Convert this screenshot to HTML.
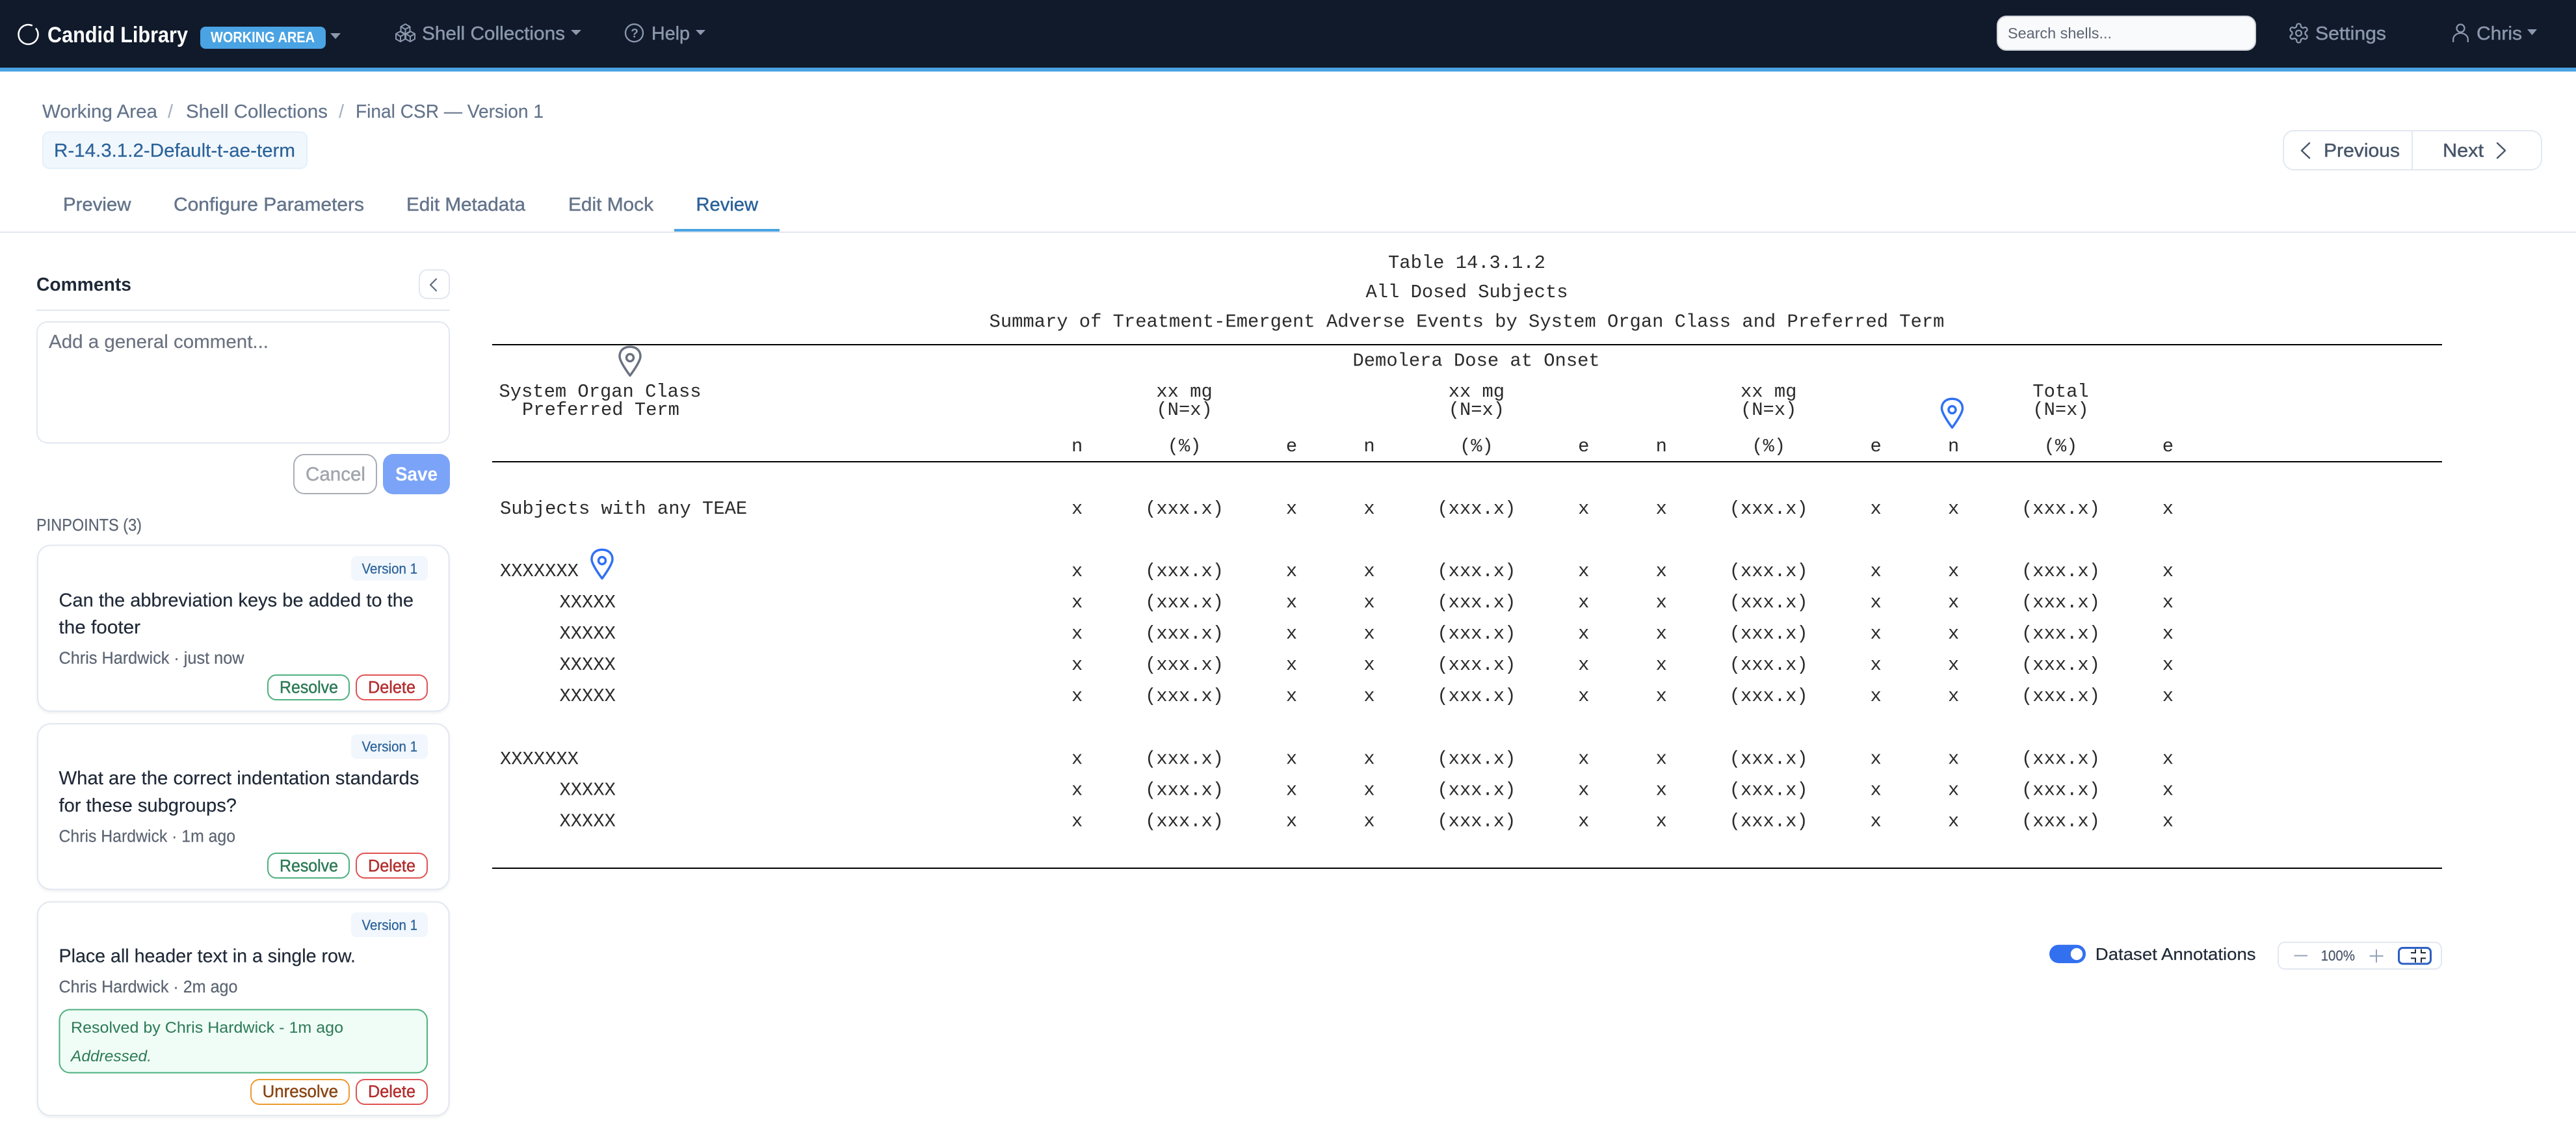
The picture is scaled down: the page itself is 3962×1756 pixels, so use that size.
<!DOCTYPE html>
<html lang="en"><head><meta charset="utf-8"><title>Candid Library</title>
<style>
html,body{margin:0;padding:0;background:#fff;width:3962px;height:1756px;overflow:hidden}
svg{display:block}
text{font-family:"Liberation Sans",sans-serif;white-space:pre}
.b{font-weight:700}
.md{stroke:currentColor;stroke-width:.45px}
.rg{stroke:currentColor;stroke-width:.2px}
.nav{font-size:29px;fill:#8b98ad;color:#8b98ad}
.bc{font-size:29px;fill:#64748b;color:#64748b}
.tab{font-size:29px;fill:#64748b;color:#64748b}
.ct{font-size:28.5px;fill:#1f2937;color:#1f2937}
.meta{font-size:25.5px;fill:#5b6472;color:#5b6472}
.ver{font-size:22px;fill:#2b6299;color:#2b6299}
.btn{font-size:25.5px}
.m text,text.m{font-family:"Liberation Mono",monospace;font-size:28.8px;fill:#2b2b2b;text-anchor:middle}
.ic{fill:none;stroke:#8b98ad;stroke-width:2.3;stroke-linecap:round;stroke-linejoin:round}
.card{fill:#fff;stroke:#e2e8f0;stroke-width:2;filter:drop-shadow(0 2px 2px rgba(15,23,42,.07))}
</style></head><body>
<svg xmlns="http://www.w3.org/2000/svg" width="3962" height="1756" viewBox="0 0 3962 1756">
<rect width="3962" height="1756" fill="#fff"/>
<!-- top bar -->
<rect width="3962" height="104" fill="#111a2b"/>
<rect y="104" width="3962" height="6" fill="#4aa3e3"/>
<path d="M55 43.4A15 15 0 1 1 49.8 39.4" fill="none" stroke="#fff" stroke-width="2.6"/>
<text x="73" y="65" class="b" font-size="34" fill="#fff" textLength="216" lengthAdjust="spacingAndGlyphs">Candid Library</text>
<rect x="308" y="41" width="193" height="34" rx="8" fill="#4aa3e3"/>
<text x="324" y="65" class="b" font-size="23" fill="#fff" textLength="160" lengthAdjust="spacingAndGlyphs">WORKING AREA</text>
<polygon points="508,51 524,51 516,60" fill="#8b98ad"/>
<g class="ic" style="stroke-width:2">
<path transform="translate(623.5 45)" d="M0-8l7 4v8l-7 4-7-4v-8zM-7-4L0 0l7-4M0 0v8"/>
<path transform="translate(616 56)" d="M0-8l7 4v8l-7 4-7-4v-8zM-7-4L0 0l7-4M0 0v8"/>
<path transform="translate(631 56)" d="M0-8l7 4v8l-7 4-7-4v-8zM-7-4L0 0l7-4M0 0v8"/>
</g>
<text x="649" y="61" class="nav md" textLength="220" lengthAdjust="spacingAndGlyphs">Shell Collections</text>
<polygon points="878,46 894,46 886,54" fill="#8b98ad"/>
<circle cx="975.5" cy="50.7" r="13.5" class="ic"/>
<text x="970.3" y="57.5" class="b" font-size="19" fill="#8b98ad">?</text>
<text x="1002" y="61" class="nav md" textLength="59" lengthAdjust="spacingAndGlyphs">Help</text>
<polygon points="1070,46 1085,46 1077.5,54" fill="#8b98ad"/>
<rect x="3072" y="25" width="397" height="52" rx="14" fill="#f9fafb" stroke="#d1d5db" stroke-width="2"/>
<text x="3088" y="59" font-size="23" fill="#5b6472" textLength="160" lengthAdjust="spacingAndGlyphs">Search shells...</text>
<g class="ic" transform="translate(3518.1 33.6) scale(1.45)" style="stroke-width:1.6">
<path d="M12.22 2h-.44a2 2 0 0 0-2 2v.18a2 2 0 0 1-1 1.73l-.43.25a2 2 0 0 1-2 0l-.15-.08a2 2 0 0 0-2.73.73l-.22.38a2 2 0 0 0 .73 2.73l.15.1a2 2 0 0 1 1 1.72v.51a2 2 0 0 1-1 1.74l-.15.09a2 2 0 0 0-.73 2.73l.22.38a2 2 0 0 0 2.73.73l.15-.08a2 2 0 0 1 2 0l.43.25a2 2 0 0 1 1 1.73V20a2 2 0 0 0 2 2h.44a2 2 0 0 0 2-2v-.18a2 2 0 0 1 1-1.73l.43-.25a2 2 0 0 1 2 0l.15.08a2 2 0 0 0 2.73-.73l.22-.39a2 2 0 0 0-.73-2.73l-.15-.08a2 2 0 0 1-1-1.74v-.5a2 2 0 0 1 1-1.74l.15-.09a2 2 0 0 0 .73-2.73l-.22-.38a2 2 0 0 0-2.73-.73l-.15.08a2 2 0 0 1-2 0l-.43-.25a2 2 0 0 1-1-1.73V4a2 2 0 0 0-2-2z"/>
<circle cx="12" cy="12" r="3"/>
</g>
<text x="3561" y="61" class="nav md" textLength="109" lengthAdjust="spacingAndGlyphs">Settings</text>
<circle cx="3784.5" cy="43.5" r="6" class="ic"/>
<path d="M3773.2 64v-3.5a11.3 9.5 0 0 1 22.6 0v3.5" class="ic"/>
<text x="3809" y="61" class="nav md" textLength="70" lengthAdjust="spacingAndGlyphs">Chris</text>
<polygon points="3887,45 3902,45 3894.5,54" fill="#8b98ad"/>

<!-- page header -->
<text x="65" y="181" class="bc rg" textLength="177" lengthAdjust="spacingAndGlyphs">Working Area</text>
<text x="258" y="181" class="bc" style="fill:#a0aec0">/</text>
<text x="286" y="181" class="bc rg" textLength="218" lengthAdjust="spacingAndGlyphs">Shell Collections</text>
<text x="521" y="181" class="bc" style="fill:#a0aec0">/</text>
<text x="547" y="181" class="bc rg" textLength="289" lengthAdjust="spacingAndGlyphs">Final CSR — Version 1</text>
<rect x="66" y="203" width="406" height="56" rx="10" fill="#f0f7fd" stroke="#e4f0fa" stroke-width="2"/>
<text x="83" y="241" font-size="29" class="rg" style="fill:#2b6299;color:#2b6299" textLength="371" lengthAdjust="spacingAndGlyphs">R-14.3.1.2-Default-t-ae-term</text>
<rect x="3512" y="201" width="397" height="60" rx="16" fill="#fff" stroke="#e2e8f0" stroke-width="2"/>
<rect x="3709" y="201" width="2" height="60" fill="#e2e8f0"/>
<path d="M3552 220l-12 11.5 12 11.5M3841 220l12 11.5-12 11.5" fill="none" stroke="#475569" stroke-width="2.4" stroke-linecap="round" stroke-linejoin="round"/>
<text x="3574" y="241" font-size="29" class="md" style="fill:#475569;color:#475569" textLength="117" lengthAdjust="spacingAndGlyphs">Previous</text>
<text x="3757" y="241" font-size="29" class="md" style="fill:#475569;color:#475569" textLength="63" lengthAdjust="spacingAndGlyphs">Next</text>
<text x="97" y="324" class="tab md" textLength="104.5" lengthAdjust="spacingAndGlyphs">Preview</text>
<text x="267" y="324" class="tab md" textLength="293" lengthAdjust="spacingAndGlyphs">Configure Parameters</text>
<text x="625" y="324" class="tab md" textLength="183" lengthAdjust="spacingAndGlyphs">Edit Metadata</text>
<text x="874" y="324" class="tab md" textLength="131" lengthAdjust="spacingAndGlyphs">Edit Mock</text>
<text x="1070.5" y="324" class="tab md" style="fill:#2b6299;color:#2b6299" textLength="95.5" lengthAdjust="spacingAndGlyphs">Review</text>
<rect y="356" width="3962" height="2" fill="#e2e8f0"/>
<rect x="1037" y="352" width="162" height="4" fill="#4aa3e3"/>

<!-- comments sidebar -->
<text x="56" y="447" class="b" font-size="29" fill="#1f2937" textLength="146" lengthAdjust="spacingAndGlyphs">Comments</text>
<rect x="645" y="415" width="46" height="44" rx="12" fill="#fff" stroke="#e2e8f0" stroke-width="2"/>
<path d="M671 429l-9 9 9 9" fill="none" stroke="#5d6b80" stroke-width="2.2" stroke-linecap="round" stroke-linejoin="round"/>
<rect x="56" y="476" width="636" height="2" fill="#e2e8f0"/>
<rect x="57" y="495" width="634" height="186" rx="16" fill="#fff" stroke="#e2e8f0" stroke-width="2"/>
<text x="75" y="535" font-size="29" class="rg" style="fill:#6b7280;color:#6b7280" textLength="338" lengthAdjust="spacingAndGlyphs">Add a general comment...</text>
<rect x="452" y="699" width="127" height="60" rx="16" fill="#fff" stroke="#a8adb5" stroke-width="2"/>
<text x="470" y="739" font-size="29.5" class="md" style="fill:#a0a5ad;color:#a0a5ad" textLength="92" lengthAdjust="spacingAndGlyphs">Cancel</text>
<rect x="589" y="698" width="103" height="62" rx="16" fill="#7ba4f8"/>
<text x="608" y="739" class="b" font-size="29.5" fill="#fff" textLength="65" lengthAdjust="spacingAndGlyphs">Save</text>
<text x="56" y="816" font-size="25.5" class="rg" style="fill:#5b6472;color:#5b6472" textLength="162" lengthAdjust="spacingAndGlyphs">PINPOINTS (3)</text>

<!-- card 1 -->
<rect x="58" y="838.5" width="632.5" height="255" rx="20" class="card"/>
<rect x="540" y="855" width="118" height="38" rx="8" fill="#f1f7fd"/>
<text x="556.5" y="882" class="ver md" style="stroke-width:.25px" textLength="85.5" lengthAdjust="spacingAndGlyphs">Version 1</text>
<text x="90.5" y="932.6" class="ct rg" textLength="545.5" lengthAdjust="spacingAndGlyphs">Can the abbreviation keys be added to the</text>
<text x="90.5" y="974" class="ct rg" textLength="125.5" lengthAdjust="spacingAndGlyphs">the footer</text>
<text x="90.5" y="1020.5" class="meta rg" textLength="285" lengthAdjust="spacingAndGlyphs">Chris Hardwick · just now</text>
<rect x="412" y="1038" width="125" height="38" rx="13" fill="#fff" stroke="#4eb07e" stroke-width="2"/>
<text x="430" y="1065.6" class="btn md" style="fill:#2c7a55;color:#2c7a55" textLength="90" lengthAdjust="spacingAndGlyphs">Resolve</text>
<rect x="548" y="1038" width="109" height="38" rx="13" fill="#fff" stroke="#e05252" stroke-width="2"/>
<text x="566" y="1065.6" class="btn md" style="fill:#b32d2d;color:#b32d2d" textLength="73" lengthAdjust="spacingAndGlyphs">Delete</text>

<!-- card 2 -->
<rect x="58" y="1113" width="632.5" height="254.5" rx="20" class="card"/>
<rect x="540" y="1129" width="118" height="38" rx="8" fill="#f1f7fd"/>
<text x="556.5" y="1155.6" class="ver md" style="stroke-width:.25px" textLength="85.5" lengthAdjust="spacingAndGlyphs">Version 1</text>
<text x="90.5" y="1206" class="ct rg" textLength="554" lengthAdjust="spacingAndGlyphs">What are the correct indentation standards</text>
<text x="90.5" y="1248" class="ct rg" textLength="273.5" lengthAdjust="spacingAndGlyphs">for these subgroups?</text>
<text x="90.5" y="1294.6" class="meta rg" textLength="271.5" lengthAdjust="spacingAndGlyphs">Chris Hardwick · 1m ago</text>
<rect x="412" y="1312" width="125" height="38" rx="13" fill="#fff" stroke="#4eb07e" stroke-width="2"/>
<text x="430" y="1340" class="btn md" style="fill:#2c7a55;color:#2c7a55" textLength="90" lengthAdjust="spacingAndGlyphs">Resolve</text>
<rect x="548" y="1312" width="109" height="38" rx="13" fill="#fff" stroke="#e05252" stroke-width="2"/>
<text x="566" y="1340" class="btn md" style="fill:#b32d2d;color:#b32d2d" textLength="73" lengthAdjust="spacingAndGlyphs">Delete</text>

<!-- card 3 -->
<rect x="58" y="1386.8" width="632.5" height="328.5" rx="20" class="card"/>
<rect x="540" y="1403" width="118" height="38" rx="8" fill="#f1f7fd"/>
<text x="556.5" y="1430" class="ver md" style="stroke-width:.25px" textLength="85.5" lengthAdjust="spacingAndGlyphs">Version 1</text>
<text x="90.5" y="1479.5" class="ct rg" textLength="456.5" lengthAdjust="spacingAndGlyphs">Place all header text in a single row.</text>
<text x="90.5" y="1526" class="meta rg" textLength="275" lengthAdjust="spacingAndGlyphs">Chris Hardwick · 2m ago</text>
<rect x="91.5" y="1552.5" width="565.5" height="97" rx="16" fill="#f0fdf6" stroke="#4eb07e" stroke-width="2"/>
<text x="109" y="1588" font-size="24.5" fill="#2c7a55" textLength="419" lengthAdjust="spacingAndGlyphs">Resolved by Chris Hardwick - 1m ago</text>
<text x="109" y="1632" font-size="24.5" font-style="italic" fill="#2c7a55" textLength="124" lengthAdjust="spacingAndGlyphs">Addressed.</text>
<rect x="386" y="1660" width="151" height="38" rx="13" fill="#fff" stroke="#ed9a30" stroke-width="2"/>
<text x="403.6" y="1687" class="btn md" style="fill:#8a4513;color:#8a4513" textLength="116.4" lengthAdjust="spacingAndGlyphs">Unresolve</text>
<rect x="548" y="1660" width="109" height="38" rx="13" fill="#fff" stroke="#e05252" stroke-width="2"/>
<text x="566" y="1687" class="btn md" style="fill:#b32d2d;color:#b32d2d" textLength="73" lengthAdjust="spacingAndGlyphs">Delete</text>

<!-- table -->
<g class="m">
<text x="2256" y="412">Table 14.3.1.2</text>
<text x="2256" y="457">All Dosed Subjects</text>
<text x="2256" y="502.3">Summary of Treatment-Emergent Adverse Events by System Organ Class and Preferred Term</text>
<text x="2270.6" y="562.3">Demolera Dose at Onset</text>
<text x="923" y="610">System Organ Class</text>
<text x="924" y="638">Preferred Term</text>
<text y="610"><tspan x="1821.6">xx mg</tspan><tspan x="2270.9">xx mg</tspan><tspan x="2720.2">xx mg</tspan><tspan x="3169.5">Total</tspan></text>
<text y="638"><tspan x="1821.6">(N=x)</tspan><tspan x="2270.9">(N=x)</tspan><tspan x="2720.2">(N=x)</tspan><tspan x="3169.5">(N=x)</tspan></text>
<text y="694"><tspan x="1656.7">n</tspan><tspan x="1821.6">(%)</tspan><tspan x="1986.5">e</tspan><tspan x="2106">n</tspan><tspan x="2270.9">(%)</tspan><tspan x="2435.8">e</tspan><tspan x="2555.3">n</tspan><tspan x="2720.2">(%)</tspan><tspan x="2885.1">e</tspan><tspan x="3004.6">n</tspan><tspan x="3169.5">(%)</tspan><tspan x="3334.4">e</tspan></text>
<text y="790"><tspan x="1656.7">x</tspan><tspan x="1821.6">(xxx.x)</tspan><tspan x="1986.5">x</tspan><tspan x="2106">x</tspan><tspan x="2270.9">(xxx.x)</tspan><tspan x="2435.8">x</tspan><tspan x="2555.3">x</tspan><tspan x="2720.2">(xxx.x)</tspan><tspan x="2885.1">x</tspan><tspan x="3004.6">x</tspan><tspan x="3169.5">(xxx.x)</tspan><tspan x="3334.4">x</tspan></text>
<text y="886"><tspan x="1656.7">x</tspan><tspan x="1821.6">(xxx.x)</tspan><tspan x="1986.5">x</tspan><tspan x="2106">x</tspan><tspan x="2270.9">(xxx.x)</tspan><tspan x="2435.8">x</tspan><tspan x="2555.3">x</tspan><tspan x="2720.2">(xxx.x)</tspan><tspan x="2885.1">x</tspan><tspan x="3004.6">x</tspan><tspan x="3169.5">(xxx.x)</tspan><tspan x="3334.4">x</tspan></text>
<text y="934"><tspan x="1656.7">x</tspan><tspan x="1821.6">(xxx.x)</tspan><tspan x="1986.5">x</tspan><tspan x="2106">x</tspan><tspan x="2270.9">(xxx.x)</tspan><tspan x="2435.8">x</tspan><tspan x="2555.3">x</tspan><tspan x="2720.2">(xxx.x)</tspan><tspan x="2885.1">x</tspan><tspan x="3004.6">x</tspan><tspan x="3169.5">(xxx.x)</tspan><tspan x="3334.4">x</tspan></text>
<text y="982"><tspan x="1656.7">x</tspan><tspan x="1821.6">(xxx.x)</tspan><tspan x="1986.5">x</tspan><tspan x="2106">x</tspan><tspan x="2270.9">(xxx.x)</tspan><tspan x="2435.8">x</tspan><tspan x="2555.3">x</tspan><tspan x="2720.2">(xxx.x)</tspan><tspan x="2885.1">x</tspan><tspan x="3004.6">x</tspan><tspan x="3169.5">(xxx.x)</tspan><tspan x="3334.4">x</tspan></text>
<text y="1030"><tspan x="1656.7">x</tspan><tspan x="1821.6">(xxx.x)</tspan><tspan x="1986.5">x</tspan><tspan x="2106">x</tspan><tspan x="2270.9">(xxx.x)</tspan><tspan x="2435.8">x</tspan><tspan x="2555.3">x</tspan><tspan x="2720.2">(xxx.x)</tspan><tspan x="2885.1">x</tspan><tspan x="3004.6">x</tspan><tspan x="3169.5">(xxx.x)</tspan><tspan x="3334.4">x</tspan></text>
<text y="1078"><tspan x="1656.7">x</tspan><tspan x="1821.6">(xxx.x)</tspan><tspan x="1986.5">x</tspan><tspan x="2106">x</tspan><tspan x="2270.9">(xxx.x)</tspan><tspan x="2435.8">x</tspan><tspan x="2555.3">x</tspan><tspan x="2720.2">(xxx.x)</tspan><tspan x="2885.1">x</tspan><tspan x="3004.6">x</tspan><tspan x="3169.5">(xxx.x)</tspan><tspan x="3334.4">x</tspan></text>
<text y="1174.5"><tspan x="1656.7">x</tspan><tspan x="1821.6">(xxx.x)</tspan><tspan x="1986.5">x</tspan><tspan x="2106">x</tspan><tspan x="2270.9">(xxx.x)</tspan><tspan x="2435.8">x</tspan><tspan x="2555.3">x</tspan><tspan x="2720.2">(xxx.x)</tspan><tspan x="2885.1">x</tspan><tspan x="3004.6">x</tspan><tspan x="3169.5">(xxx.x)</tspan><tspan x="3334.4">x</tspan></text>
<text y="1222.5"><tspan x="1656.7">x</tspan><tspan x="1821.6">(xxx.x)</tspan><tspan x="1986.5">x</tspan><tspan x="2106">x</tspan><tspan x="2270.9">(xxx.x)</tspan><tspan x="2435.8">x</tspan><tspan x="2555.3">x</tspan><tspan x="2720.2">(xxx.x)</tspan><tspan x="2885.1">x</tspan><tspan x="3004.6">x</tspan><tspan x="3169.5">(xxx.x)</tspan><tspan x="3334.4">x</tspan></text>
<text y="1270.5"><tspan x="1656.7">x</tspan><tspan x="1821.6">(xxx.x)</tspan><tspan x="1986.5">x</tspan><tspan x="2106">x</tspan><tspan x="2270.9">(xxx.x)</tspan><tspan x="2435.8">x</tspan><tspan x="2555.3">x</tspan><tspan x="2720.2">(xxx.x)</tspan><tspan x="2885.1">x</tspan><tspan x="3004.6">x</tspan><tspan x="3169.5">(xxx.x)</tspan><tspan x="3334.4">x</tspan></text>
<text x="769" y="790" style="text-anchor:start">Subjects with any TEAE</text>
<text x="769" y="886" style="text-anchor:start">XXXXXXX</text>
<text x="860.5" y="934" style="text-anchor:start">XXXXX</text>
<text x="860.5" y="982" style="text-anchor:start">XXXXX</text>
<text x="860.5" y="1030" style="text-anchor:start">XXXXX</text>
<text x="860.5" y="1078" style="text-anchor:start">XXXXX</text>
<text x="769" y="1175" style="text-anchor:start">XXXXXXX</text>
<text x="860.5" y="1222.5" style="text-anchor:start">XXXXX</text>
<text x="860.5" y="1270.5" style="text-anchor:start">XXXXX</text>
</g>
<rect x="757" y="529" width="2999" height="2" fill="#000"/>
<rect x="757" y="709" width="2999" height="2" fill="#000"/>
<rect x="757" y="1334" width="2999" height="2" fill="#000"/>

<!-- pins -->
<g fill="none" stroke-width="3.5" stroke-linejoin="round">
<g transform="translate(951 531.5)" stroke="#6b7280"><path d="M18 46C18 46 2 25 2 16.5C2 7 9 1.8 18 1.8S34 7 34 16.5C34 25 18 46 18 46Z"/><circle cx="18" cy="18.5" r="5.5"/></g>
<g transform="translate(908 843.5)" stroke="#3070f5"><path d="M18 46C18 46 2 25 2 16.5C2 7 9 1.8 18 1.8S34 7 34 16.5C34 25 18 46 18 46Z"/><circle cx="18" cy="18.5" r="5.5"/></g>
<g transform="translate(2984.5 611.5)" stroke="#3070f5"><path d="M18 46C18 46 2 25 2 16.5C2 7 9 1.8 18 1.8S34 7 34 16.5C34 25 18 46 18 46Z"/><circle cx="18" cy="18.5" r="5.5"/></g>
</g>

<!-- bottom controls -->
<rect x="3152" y="1452.7" width="56" height="28.3" rx="14.15" fill="#3370f0"/>
<circle cx="3194" cy="1467" r="9.2" fill="#fff"/>
<text x="3222.8" y="1476" font-size="26" class="rg" style="fill:#1f2937;color:#1f2937" textLength="246.8" lengthAdjust="spacingAndGlyphs">Dataset Annotations</text>
<rect x="3504" y="1449" width="251" height="41" rx="10" fill="#fff" stroke="#e2e8f0" stroke-width="2"/>
<rect x="3528.6" y="1468.5" width="20.4" height="2" fill="#94a3b8"/>
<text x="3569.6" y="1477" font-size="22" class="rg" style="fill:#475569;color:#475569" textLength="52.4" lengthAdjust="spacingAndGlyphs">100%</text>
<path d="M3644.6 1470h21M3655 1460v20" stroke="#94a3b8" stroke-width="2" fill="none"/>
<rect x="3689.5" y="1457.5" width="49" height="24.5" rx="6" fill="#fff" stroke="#2a5fc4" stroke-width="3"/>
<path d="M3715 1459.5v5.5h-7M3724 1459.5v5.5h7M3715 1480v-6.5h-7M3724 1480v-6.5h7" fill="none" stroke="#1f2937" stroke-width="2"/>
</svg>
</body></html>
